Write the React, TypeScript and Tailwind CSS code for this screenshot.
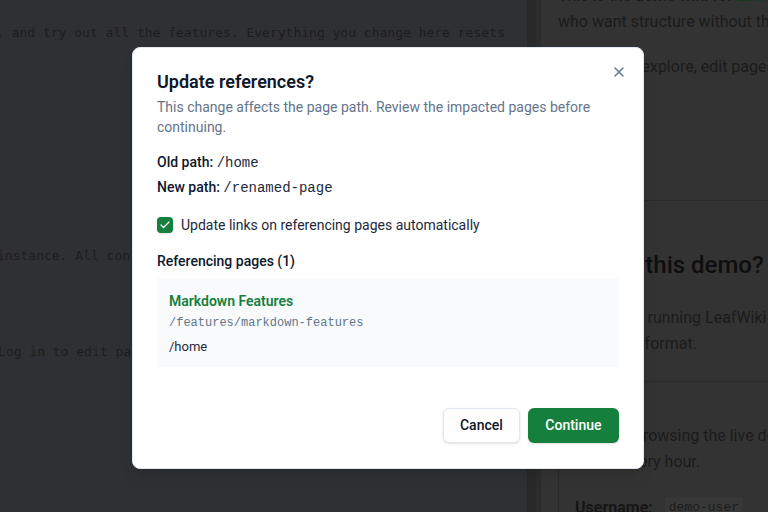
import { X, Check } from "lucide-react";

export default function App() {
  return (
    <div className="relative w-[768px] h-[512px] overflow-hidden bg-[#333333] font-['Roboto',sans-serif]">
      <div className="flex h-full">
        {/* Editor (dimmed) */}
        <div className="w-[527px] shrink-0 bg-[#2f3033] overflow-hidden font-['DejaVu_Sans_Mono',monospace] text-[13px] leading-5 text-[#1c1d1f] whitespace-pre">
          <div className="-ml-[4px] mt-[23px]">, and try out all the features. Everything you change here resets</div>
          <div className="-ml-[3px] mt-[203px]">instance. All content is reset on a regular schedule.</div>
          <div className="-ml-[2px] mt-[76px]">Log in to edit pages and explore the editor.</div>
        </div>
        <div className="w-[9px] shrink-0 bg-[#28292b]" />
        <div className="w-[5px] shrink-0 bg-[#2d2d2e]" />
        {/* Preview (dimmed) */}
        <div className="flex-1 overflow-hidden pl-[17px] text-[16px] leading-[26px] text-[#1b1b1b] whitespace-nowrap">
          <div className="-mt-[17px]">
            <div>
              This is the <span className="font-bold">demo wiki</span> for <span className="text-[#0f3d1f]">LeafWiki</span>, a wiki for people
            </div>
            <div>who want structure without the overhead.</div>
          </div>
          <div className="mt-[19px]">
            <div>Feel free to explore, edit pages and test</div>
            <div>everything.</div>
          </div>
          <div className="mt-[94px] border-t border-l border-[#2a2a2a]">
            <div className="pl-4 pt-12 pb-6">
              <div className="text-[24px] leading-8 font-medium text-[#0e0e0e]">About this demo?</div>
              <div className="mt-6">It is just a running LeafWiki instance</div>
              <div>plain-text format.</div>
            </div>
            <div className="border-t border-[#2a2a2a] pl-4 pt-[41px]">
              <div>Start by browsing the live demo. Content</div>
              <div>resets every hour.</div>
              <div className="mt-[20px] flex items-center gap-3">
                <span className="font-bold text-[#161616]">Username:</span>
                <span className="font-['Liberation_Mono',monospace] text-[13px] leading-5 px-1 bg-[#383838] text-[#1b1b1b]">demo-user</span>
              </div>
            </div>
          </div>
        </div>
      </div>

      {/* Modal */}
      <div className="absolute left-[132px] top-[47px] w-[512px] rounded-lg border border-[#e2e8f0] bg-white px-6 pt-5 pb-[25px] shadow-lg">
        <button className="absolute right-4 top-4 text-[#64748b]">
          <X size={16} strokeWidth={2} />
        </button>
        <div className="text-[18px] leading-7 font-semibold text-[#0f172a]">Update references?</div>
        <div className="mt-px text-[14px] leading-5 text-[#64748b]">
          This change affects the page path. Review the impacted pages before continuing.
        </div>
        <div className="mt-[15px] flex flex-col gap-[4px] text-[14px] leading-5 text-[#0f172a]">
          <div>
            <span className="font-medium">Old path:</span>{" "}
            <span className="font-['Liberation_Mono',monospace] text-[#1e293b]">/home</span>
          </div>
          <div>
            <span className="font-medium">New path:</span>{" "}
            <span className="font-['Liberation_Mono',monospace] text-[#1e293b]">/renamed-page</span>
          </div>
        </div>
        <div className="mt-[17px] flex h-5 items-center gap-2">
          <span className="flex h-4 w-4 items-center justify-center rounded-[4px] bg-[#15803d] text-white shadow-sm">
            <Check size={12} strokeWidth={2.5} />
          </span>
          <span className="text-[14px] leading-5 text-[#1e293b]">Update links on referencing pages automatically</span>
        </div>
        <div className="mt-[16px] text-[14px] leading-5 font-medium text-[#0f172a]">Referencing pages (1)</div>
        <div className="mt-[7px] bg-[#f8fafc] px-3 pt-[13px] pb-[10px]">
          <div className="text-[14px] leading-5 font-semibold text-[#15803d]">Markdown Features</div>
          <div className="mt-1 font-['Liberation_Mono',monospace] text-[12px] leading-4 text-[#64748b]">/features/markdown-features</div>
          <div className="mt-[6px] text-[13px] leading-5 text-[#1e293b]">/home</div>
        </div>
        <div className="mt-[41px] flex justify-end gap-2">
          <button className="h-[35px] rounded-md border border-[#e2e8f0] bg-white px-4 text-[14px] font-medium text-[#0f172a] shadow-sm">
            Cancel
          </button>
          <button className="h-[35px] rounded-md bg-[#15803d] px-[17.5px] text-[14px] font-medium text-white shadow-sm">
            Continue
          </button>
        </div>
      </div>
    </div>
  );
}
